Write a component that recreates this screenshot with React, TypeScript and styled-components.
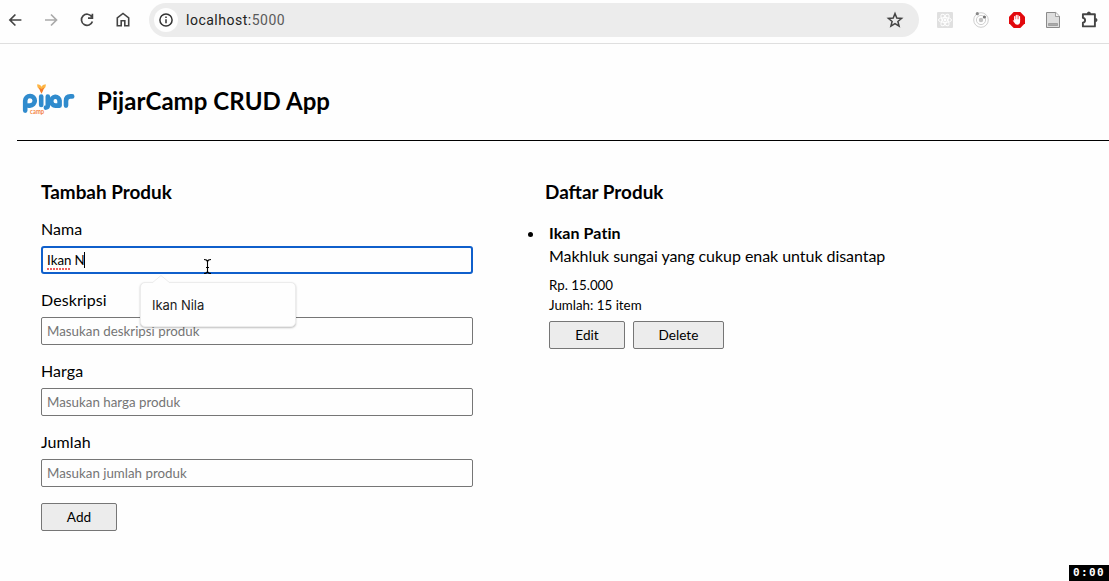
import React from 'react';
import styled, { createGlobalStyle } from 'styled-components';

const GlobalStyle = createGlobalStyle`
  * { box-sizing: border-box; }
  html, body { margin: 0; padding: 0; }
  body { background: #fefefe; color: #000; font-family: Lato, "Liberation Sans", sans-serif; overflow: hidden; }
  h1, h2, h3, p, ul { margin: 0; padding: 0; }
`;

const Screen = styled.div`
  position: relative;
  width: 1109px;
  height: 581px;
  overflow: hidden;
`;

const Toolbar = styled.nav`
  display: flex;
  align-items: center;
  height: 44px;
  padding: 0 8px 4px 3px;
  border-bottom: 1px solid #dfdfdf;
`;

const NavIcons = styled.div`
  display: flex;
  gap: 12px;
  margin-right: 14px;
`;

const Icon = styled.svg`
  display: block;
  flex: none;
  width: 24px;
  height: 24px;
  fill: none;
`;

const AddressBar = styled.div`
  display: flex;
  align-items: center;
  width: 770px;
  height: 34px;
  padding: 0 12px 0 5px;
  border-radius: 17px;
  background: #ececec;
`;

const SiteInfo = styled.span`
  display: flex;
  border-radius: 50%;
  background: #fefefe;
`;

const Url = styled.span`
  flex: 1;
  margin-left: 8px;
  font: 14px/20px Roboto, "Liberation Sans", sans-serif;
  letter-spacing: 0.5px;
  color: #5a5a5a;
  b { font-weight: 400; color: #222; }
`;

const Extensions = styled.div`
  display: flex;
  gap: 12px;
  margin-left: 14px;
`;

const Header = styled.header`
  display: flex;
  align-items: center;
  height: 97px;
  margin-left: 17px;
  padding: 0 0 0 4px;
  border-bottom: 1px solid #000;
`;

const Logo = styled.svg`
  width: 56px;
  height: 36px;
  margin: 14px 20px 0 0;
`;

const Title = styled.h1`
  margin-top: 18px;
  font-size: 24px;
  line-height: 30px;
  font-weight: 700;
  letter-spacing: 0.06px;
`;

const Columns = styled.main`
  display: grid;
  grid-template-columns: 432px 1fr;
  column-gap: 72px;
  padding: 39px 0 0 41px;
`;

const Heading = styled.h2`
  font-size: 18.9px;
  line-height: 24px;
  font-weight: 700;
`;

const Form = styled.form`
  padding-top: 15px;
`;

const Field = styled.div`
  position: relative;
  height: 71px;
`;

const Label = styled.label`
  display: block;
  height: 27px;
  font-size: 16px;
  line-height: 20px;
  letter-spacing: 0.08px;
`;

const inputBox = `
  display: flex;
  align-items: center;
  width: 100%;
  height: 28px;
  border-radius: 2px;
  background: #fefefe;
  font: 13.33px/18px Lato, sans-serif;
`;

const Input = styled.input`
  ${inputBox}
  border: 1px solid #767676;
  padding: 0 5px;
  outline: none;
  &::placeholder { color: #757575; opacity: 1; }
`;

const ActiveInput = styled.div`
  ${inputBox}
  border: 2px solid #0f5fcb;
  border-radius: 3px;
  padding: 0 4px;
`;

const Misspelled = styled.span`
  padding-bottom: 1px;
  margin-right: 3px;
  background: repeating-linear-gradient(90deg, #ee5f60 0 2px, transparent 2px 3px) left bottom / 100% 2px no-repeat;
`;

const Caret = styled.i`
  width: 1px;
  height: 16px;
  margin-left: -1px;
  background: #000;
`;

const Suggestion = styled.div`
  position: absolute;
  z-index: 1;
  left: 99px;
  top: 63px;
  width: 156px;
  height: 45px;
  padding: 14px 11px;
  border: 1px solid #ececec;
  border-radius: 5px;
  background: #fefefe;
  box-shadow: 0 1px 2px rgba(0, 0, 0, 0.25);
  font: 13px/16px Inter, sans-serif;
  letter-spacing: -0.05px;
  color: #222;
`;

const SuggestionTip = styled.svg`
  position: absolute;
  left: 11px;
  top: -8px;
  width: 18px;
  height: 9px;
`;

const TextCursor = styled.svg`
  position: absolute;
  left: 162px;
  top: 39px;
  width: 9px;
  height: 17px;
`;

const Button = styled.button<{ $width: number }>`
  width: ${(p) => p.$width}px;
  height: 28px;
  padding: 0;
  border: 1px solid #767676;
  border-radius: 2px;
  background: #ececec;
  color: #000;
  font: 13.6px/18px Lato, sans-serif;
`;

const Products = styled.ul`
  padding: 17px 0 0 4px;
`;

const Product = styled.li`
  list-style: none;
`;

const Name = styled.h3`
  display: flex;
  align-items: center;
  margin-left: -21px;
  font-size: 16px;
  line-height: 23px;
  font-weight: 700;
  letter-spacing: 0.08px;
  &::before {
    content: "";
    width: 5px;
    height: 5px;
    margin: 3px 16px 0 0;
    border-radius: 50%;
    background: #000;
  }
`;

const Description = styled.p`
  font-size: 16px;
  line-height: 24px;
  letter-spacing: -0.05px;
`;

const Detail = styled.p`
  font-size: 13.33px;
  line-height: 20px;
`;

const Details = styled.div`
  padding-top: 7px;
`;

const Actions = styled.div`
  display: flex;
  gap: 8px;
  padding-top: 6px;
`;

const Timer = styled.div`
  position: absolute;
  right: 0;
  bottom: 0;
  width: 40px;
  height: 16px;
  background: #000;
  color: #fff;
  font: 700 11px/16px "DejaVu Sans Mono", monospace;
  letter-spacing: 1.38px;
  padding-left: 4px;
`;

const dark = '#444';

function LogoMark() {
  return (
    <Logo viewBox="0 0 56 36">
      <g fill="none" stroke="#308bcd" strokeWidth="4.6" strokeLinecap="round" strokeLinejoin="round">
        <path d="M4.2 29.6V19.7a4.8 4.8 0 1 1 4.8 4.9H7.5" />
        <path d="M20.2 15.5V24" />
        <path d="M26.8 15.5V24.5q0 1.8-1.9 2.1" />
        <path d="M38.6 24.6V19.8a4.2 4.4 0 1 0-4.2 4.8h4.2" />
        <path d="M45 24.6v-4.6q0-4.6 4.4-4.6h1.8" />
      </g>
      <path d="M16.2 3.2q3.5 .3 4.2 2.6q.9-2.3 4.4-2.6q.3 4-2.8 5l-1.6 4-1.6-4q-2.9-1-2.6-5z" fill="#fdb545" />
      <path d="M17.8 6.5l2.7 1.6 2.7-1.6-1.2 3.2-1.5 3-1.5-3z" fill="#f47b2a" />
      <text x="9.1" y="33.1" fontFamily="Lato, sans-serif" fontSize="6.6" fontWeight="700" fill="#f4853f" textLength="14" lengthAdjust="spacingAndGlyphs">camp</text>
    </Logo>
  );
}

function FormField({ label, placeholder }: { label: string; placeholder: string }) {
  return (
    <Field>
      <Label>{label}</Label>
      <Input placeholder={placeholder} />
    </Field>
  );
}

export default function App() {
  return (
    <Screen>
      <GlobalStyle />
      <Toolbar>
        <NavIcons>
          <Icon viewBox="0 0 24 24" stroke={dark} strokeWidth="1.7"><path d="M18.4 12H7.4M12.4 6.5L6.9 12l5.5 5.5" /></Icon>
          <Icon viewBox="0 0 24 24" stroke="#aaa" strokeWidth="1.7"><path d="M6 12h11M12 6.5l5.5 5.5-5.5 5.5" /></Icon>
          <Icon viewBox="0 0 24 24" stroke={dark} strokeWidth="1.7"><path d="M16.8 8.8A5.6 5.6 0 1 0 17.4 13.5M17.4 5.8v4.4H13" /></Icon>
          <Icon viewBox="0 0 24 24" stroke={dark} strokeWidth="1.6"><path d="M6.3 17.8V9.8L12 5.4l5.7 4.4v8h-3.9v-5h-3.6v5z" /></Icon>
        </NavIcons>
        <AddressBar>
          <SiteInfo>
            <Icon viewBox="0 0 24 24" stroke="#333" strokeWidth="1.5">
              <circle cx="12" cy="12" r="6.1" /><path d="M12 11.3v4M12 8.4V10" />
            </Icon>
          </SiteInfo>
          <Url><b>localhost:</b>5000</Url>
          <Icon viewBox="0 0 24 24" stroke={dark} strokeWidth="1.5">
            <path d="M12 5.6l1.8 4.4 4.8.4-3.7 3.1 1.2 4.7L12 15.7l-4.1 2.5 1.2-4.7-3.7-3.1 4.8-.4z" />
          </Icon>
        </AddressBar>
        <Extensions>
          <Icon viewBox="0 0 24 24">
            <rect x="4" y="4" width="16" height="16" rx="1" fill="#e0e0e0" />
            <g stroke="#fefefe" strokeWidth="1">
              <ellipse cx="12" cy="12" rx="6.5" ry="2.5" />
              <ellipse cx="12" cy="12" rx="6.5" ry="2.5" transform="rotate(60 12 12)" />
              <ellipse cx="12" cy="12" rx="6.5" ry="2.5" transform="rotate(120 12 12)" />
            </g>
            <circle cx="12" cy="12" r="1.4" fill="#fefefe" />
          </Icon>
          <Icon viewBox="0 0 24 24">
            <circle cx="12" cy="12" r="7.3" stroke="#cfcfcf" />
            <circle cx="12" cy="12" r="4.6" stroke="#cfcfcf" />
            <circle cx="12" cy="12" r="2.2" fill="#c2c2c2" />
            <circle cx="8.3" cy="5.7" r="1.6" fill="#888" />
            <circle cx="15.4" cy="9" r="1.6" fill="#777" />
          </Icon>
          <Icon viewBox="0 0 24 24">
            <path d="M8.7 4h6.6L20 8.7v6.6L15.3 20H8.7L4 15.3V8.7z" fill="#e2090d" />
            <path d="M9.7 12V8.6M11.3 11.5V7.4M12.9 11.5V7.4M14.5 12V8.6" stroke="#fff" strokeWidth="1.2" strokeLinecap="round" />
            <path d="M9.2 11.2h5.9v2.6q-.2 2.9-2.8 3-2 0-2.9-2L7.7 12.6q.5-.8 1.5 .2z" fill="#fff" />
          </Icon>
          <Icon viewBox="0 0 24 24">
            <path d="M5.5 4.5h9.3l3.7 3.7v11.3h-13z" fill="#dedede" stroke="#8b8b8b" />
            <path d="M14.5 4.5v4h4" fill="#f5f5f5" stroke="#8b8b8b" strokeWidth=".8" />
            <path d="M7.5 15.5h9v2h-9z" fill="#aaa" stroke="#888" strokeWidth=".6" />
          </Icon>
          <Icon viewBox="0 0 24 24">
            <path d="M5.9 6.2h12v12.2h-12v-3.6q2.2-.4 2.2-2.5t-2.2-2.5z" stroke={dark} strokeWidth="1.9" strokeLinejoin="round" />
            <path d="M9.8 6q0-2.5 2.1-2.5T14 6zM18.2 10q2.3 0 2.3 2.1t-2.3 2.1z" fill={dark} />
          </Icon>
        </Extensions>
      </Toolbar>

      <Header>
        <LogoMark />
        <Title>PijarCamp CRUD App</Title>
      </Header>

      <Columns>
        <section>
          <Heading>Tambah Produk</Heading>
          <Form>
            <Field>
              <Label>Nama</Label>
              <ActiveInput><Misspelled>Ikan</Misspelled>N<Caret /></ActiveInput>
              <TextCursor viewBox="0 0 9 17" fill="none" stroke="#000" strokeWidth="1.1">
                <path d="M1 1.5q3 0 3.5 2 .5-2 3.5-2M1 15.5q3 0 3.5-2 .5 2 3.5 2M4.5 3v11M3 9.5h3" />
              </TextCursor>
              <Suggestion>
                <SuggestionTip viewBox="0 0 18 9"><path d="M0 8L9 .5 18 8v1H0z" fill="#fefefe" /><path d="M0 8L9 .5 18 8" fill="none" stroke="#ececec" /></SuggestionTip>
                Ikan Nila
              </Suggestion>
            </Field>
            <FormField label="Deskripsi" placeholder="Masukan deskripsi produk" />
            <FormField label="Harga" placeholder="Masukan harga produk" />
            <FormField label="Jumlah" placeholder="Masukan jumlah produk" />
            <Button type="button" $width={76}>Add</Button>
          </Form>
        </section>
        <section>
          <Heading>Daftar Produk</Heading>
          <Products>
            <Product>
              <Name>Ikan Patin</Name>
              <Description>Makhluk sungai yang cukup enak untuk disantap</Description>
              <Details>
                <Detail>Rp. 15.000</Detail>
                <Detail>Jumlah: 15 item</Detail>
              </Details>
              <Actions>
                <Button type="button" $width={76}>Edit</Button>
                <Button type="button" $width={91}>Delete</Button>
              </Actions>
            </Product>
          </Products>
        </section>
      </Columns>
      <Timer>0:00</Timer>
    </Screen>
  );
}
